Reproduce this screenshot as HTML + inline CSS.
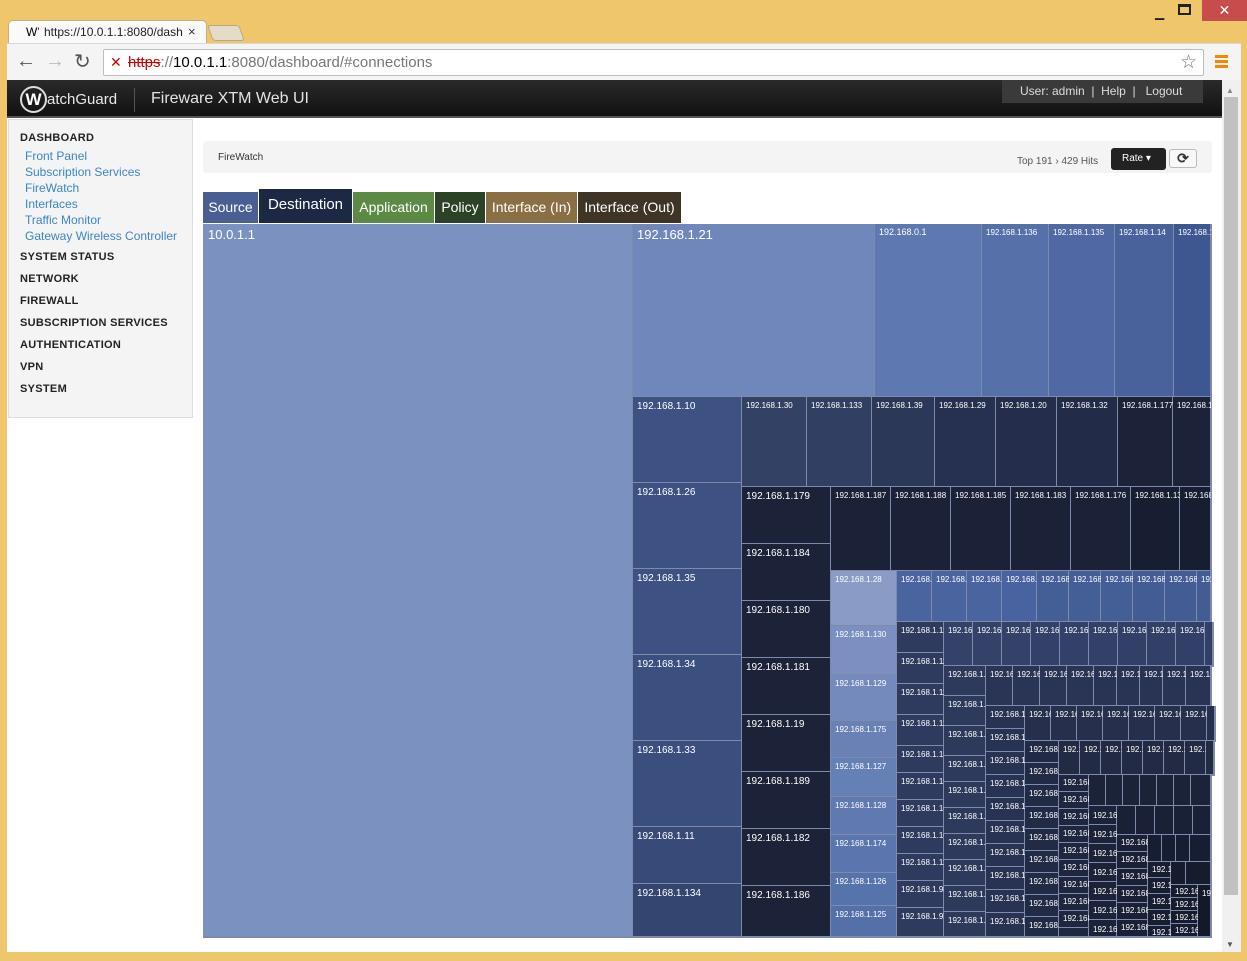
<!DOCTYPE html>
<html><head><meta charset="utf-8">
<style>
*{margin:0;padding:0;box-sizing:border-box}
body{width:1247px;height:961px;overflow:hidden;background:#efc66b;font-family:"Liberation Sans",sans-serif;position:relative}
.a{position:absolute}
.c{position:absolute;border-style:none solid solid none;border-width:1px;border-color:#7d8aab;box-shadow:inset -1px -1px 0 #7d8aab;color:#fff;font-size:9px;padding:3px 4px;overflow:hidden;white-space:nowrap;line-height:11px}
.b{font-size:10px;padding:4px 4px}
.tab{position:absolute;top:192px;height:31px;color:#fff;font-size:14px;line-height:31px;text-align:center}
.nav a{display:block;color:#3a86c8;font-size:12px;line-height:16px;padding-left:16px}
.nav b{display:block;font-size:11px;color:#222;padding-left:11px;letter-spacing:.3px;line-height:13px}
.nav b.s{margin-top:9px}
</style></head><body>
<!-- browser chrome -->
<div class="a" style="left:8px;top:20px;width:199px;height:24px;background:#fafafa;border-radius:5px 5px 0 0;border:1px solid #c9b07a;border-bottom:none"></div>
<div class="a" style="left:26px;top:25px;font-size:12px;color:#000">W<span style="color:#c00">'</span></div>
<div class="a" style="left:44px;top:25px;font-size:12px;color:#222">https://10.0.1.1:8080/dash</div>
<div class="a" style="left:188px;top:24px;font-size:13px;color:#333">×</div>
<div class="a" style="left:210px;top:25px;width:32px;height:16px;background:#e4dcc8;border:1px solid #b9a97f;border-radius:3px;transform:skewX(20deg)"></div>
<div class="a" style="left:1155px;top:6px;font-size:12px;color:#222">▁</div>
<div class="a" style="left:1178px;top:4px;width:13px;height:11px;border:2px solid #222;border-top-width:3px"></div>
<div class="a" style="left:1202px;top:0;width:45px;height:21px;background:#c94c4c;color:#fff;text-align:center;font-size:14px;line-height:21px">✕</div>
<div class="a" style="left:7px;top:43px;width:1234px;height:37px;background:#f4f4f4;border-top:1px solid #d8d8d8"></div>
<div class="a" style="left:16px;top:50px;font-size:20px;color:#555">←</div>
<div class="a" style="left:45px;top:50px;font-size:20px;color:#bbb">→</div>
<div class="a" style="left:74px;top:49px;font-size:20px;color:#555">↻</div>
<div class="a" style="left:103px;top:49px;width:1101px;height:27px;background:#fff;border:1px solid #bdbdbd;border-radius:2px"></div>
<div class="a" style="left:110px;top:54px;font-size:14px;color:#c00">✕</div>
<div class="a" style="left:128px;top:54px;font-size:15px;color:#777"><span style="color:#c00;text-decoration:line-through">https</span>://<span style="color:#000">10.0.1.1</span>:8080/dashboard/#connections</div>
<div class="a" style="left:1180px;top:51px;font-size:19px;color:#777">☆</div>
<div class="a" style="left:1215px;top:55px;width:13px;height:13px;border-top:3px solid #f08a00;border-bottom:3px solid #f08a00"><div style="margin-top:2px;height:3px;background:#f08a00"></div></div>
<!-- page -->
<div class="a" style="left:7px;top:80px;width:1215px;height:872px;background:#fff"></div>
<div class="a" style="left:1222px;top:80px;width:19px;height:872px;background:#f0f0f0"></div>
<div class="a" style="left:1224px;top:97px;width:14px;height:798px;background:#c1c1c1"></div>
<div class="a" style="left:1226px;top:86px;font-size:8px;color:#888">▲</div>
<div class="a" style="left:1226px;top:940px;font-size:8px;color:#555">▼</div>
<!-- header -->
<div class="a" style="left:7px;top:80px;width:1215px;height:38px;background:linear-gradient(#2a2a2a,#111);border-bottom:2px solid #555"></div>
<div class="a" style="left:20px;top:86px;width:27px;height:27px;border:2px solid #ddd;border-radius:50%;color:#fff;font-size:17px;font-weight:bold;text-align:center;line-height:23px">W</div>
<div class="a" style="left:47px;top:91px;font-size:15px;color:#e8e8e8">atchGuard</div>
<div class="a" style="left:134px;top:88px;width:1px;height:24px;background:#555"></div>
<div class="a" style="left:151px;top:90px;font-size:16px;color:#e4e4e4">Fireware XTM Web UI</div>
<div class="a" style="left:1002px;top:80px;width:201px;height:23px;background:#3a3a3a;color:#ddd;font-size:12px;line-height:22px;padding-left:18px">User: admin &nbsp;| &nbsp;Help &nbsp;| &nbsp; Logout</div>
<!-- sidebar -->
<div class="a nav" style="left:8px;top:119px;width:185px;height:299px;background:#f4f4f4;border:1px solid #ddd;padding-top:12px">
<b style="margin-bottom:3px">DASHBOARD</b>
<a>Front Panel</a><a>Subscription Services</a><a>FireWatch</a><a>Interfaces</a><a>Traffic Monitor</a><a>Gateway Wireless Controller</a>
<b style="margin-top:7px">SYSTEM STATUS</b><b class="s">NETWORK</b><b class="s">FIREWALL</b><b class="s">SUBSCRIPTION SERVICES</b><b class="s">AUTHENTICATION</b><b class="s">VPN</b><b class="s">SYSTEM</b>
</div>
<!-- firewatch bar -->
<div class="a" style="left:203px;top:141px;width:1009px;height:32px;background:#f4f4f4;border-radius:3px"></div>
<div class="a" style="left:218px;top:152px;font-size:10px;color:#333">FireWatch</div>
<div class="a" style="left:1017px;top:156px;font-size:10px;color:#555">Top 191 › 429 Hits</div>
<div class="a" style="left:1111px;top:148px;width:55px;height:22px;background:#222;border-radius:3px;color:#fff;font-size:10px;line-height:21px;padding-left:11px">Rate ▾</div>
<div class="a" style="left:1169px;top:149px;width:28px;height:19px;background:#f8f8f8;border:1px solid #bbb;border-radius:3px;text-align:center;font-size:14px;line-height:17px;color:#333;font-weight:bold">⟳</div>
<!-- tabs -->
<div class="tab" style="left:203px;width:55px;background:#4a5e94">Source</div>
<div class="tab" style="left:259px;top:189px;height:34px;width:93px;background:#1d2844;font-size:15px">Destination</div>
<div class="tab" style="left:353px;width:81px;background:#5a8a44">Application</div>
<div class="tab" style="left:435px;width:50px;background:#2c4226">Policy</div>
<div class="tab" style="left:486px;width:91px;background:#8a6e44">Interface (In)</div>
<div class="tab" style="left:578px;width:103px;background:#3e3526">Interface (Out)</div>
<!-- treemap -->
<div class="a" style="left:203px;top:224px;width:1009px;height:714px;background:#1a2034;border-top:1px solid #8a9ac0;border-left:1px solid #8a9ac0"></div>
<div class="c" style="left:203px;top:224px;width:431px;height:714px;background:#7b92c1;font-size:13px;padding:3px 5px;line-height:16px">10.0.1.1</div>
<div class="c" style="left:633px;top:224px;width:243px;height:174px;background:#6f87ba;font-size:13px;line-height:16px">192.168.1.21</div>
<div class="c" style="left:875px;top:224px;width:108px;height:174px;background:#5e78b1">192.168.0.1</div>
<div class="c" style="left:982px;top:224px;width:68px;height:174px;background:#5670aa;font-size:8px">192.168.1.136</div>
<div class="c" style="left:1049px;top:224px;width:67px;height:174px;background:#5069a4;font-size:8px">192.168.1.135</div>
<div class="c" style="left:1115px;top:224px;width:60px;height:174px;background:#4a629c;font-size:8px">192.168.1.14</div>
<div class="c" style="left:1174px;top:224px;width:38px;height:174px;background:#3f5790;font-size:8px">192.168.1.</div>
<div class="c b" style="left:633px;top:397px;width:110px;height:87px;background:#3d5282">192.168.1.10</div>
<div class="c b" style="left:633px;top:483px;width:110px;height:87px;background:#3d5282">192.168.1.26</div>
<div class="c b" style="left:633px;top:569px;width:110px;height:87px;background:#3d5282">192.168.1.35</div>
<div class="c b" style="left:633px;top:655px;width:110px;height:87px;background:#3c5080">192.168.1.34</div>
<div class="c b" style="left:633px;top:741px;width:110px;height:87px;background:#3b4f7e">192.168.1.33</div>
<div class="c b" style="left:633px;top:827px;width:110px;height:58px;background:#384b78">192.168.1.11</div>
<div class="c b" style="left:633px;top:884px;width:110px;height:54px;background:#344670">192.168.1.134</div>
<div class="c" style="left:742px;top:397px;width:66px;height:91px;background:#334264;font-size:8px">192.168.1.30</div>
<div class="c" style="left:807px;top:397px;width:66px;height:91px;background:#314062;font-size:8px">192.168.1.133</div>
<div class="c" style="left:872px;top:397px;width:64px;height:91px;background:#2c3858;font-size:8px">192.168.1.39</div>
<div class="c" style="left:935px;top:397px;width:62px;height:91px;background:#263050;font-size:8px">192.168.1.29</div>
<div class="c" style="left:996px;top:397px;width:62px;height:91px;background:#242e4c;font-size:8px">192.168.1.20</div>
<div class="c" style="left:1057px;top:397px;width:62px;height:91px;background:#222b47;font-size:8px">192.168.1.32</div>
<div class="c" style="left:1118px;top:397px;width:56px;height:91px;background:#1c2339;font-size:8px">192.168.1.177</div>
<div class="c" style="left:1173px;top:397px;width:39px;height:91px;background:#1c2339;font-size:8px">192.168.1.</div>
<div class="c b" style="left:742px;top:487px;width:90px;height:58px;background:#1c2338">192.168.1.179</div>
<div class="c b" style="left:742px;top:544px;width:90px;height:58px;background:#1c2338">192.168.1.184</div>
<div class="c b" style="left:742px;top:601px;width:90px;height:58px;background:#1c2338">192.168.1.180</div>
<div class="c b" style="left:742px;top:658px;width:90px;height:58px;background:#1c2338">192.168.1.181</div>
<div class="c b" style="left:742px;top:715px;width:90px;height:58px;background:#1c2338">192.168.1.19</div>
<div class="c b" style="left:742px;top:772px;width:90px;height:58px;background:#1c2338">192.168.1.189</div>
<div class="c b" style="left:742px;top:829px;width:90px;height:58px;background:#1c2338">192.168.1.182</div>
<div class="c b" style="left:742px;top:886px;width:90px;height:52px;background:#1c2338">192.168.1.186</div>
<div class="c" style="left:831px;top:487px;width:61px;height:85px;background:#1b2237;font-size:8px">192.168.1.187</div>
<div class="c" style="left:891px;top:487px;width:61px;height:85px;background:#1b2237;font-size:8px">192.168.1.188</div>
<div class="c" style="left:951px;top:487px;width:61px;height:85px;background:#1b2237;font-size:8px">192.168.1.185</div>
<div class="c" style="left:1011px;top:487px;width:61px;height:85px;background:#1b2237;font-size:8px">192.168.1.183</div>
<div class="c" style="left:1071px;top:487px;width:61px;height:85px;background:#1b2237;font-size:8px">192.168.1.176</div>
<div class="c" style="left:1131px;top:487px;width:50px;height:85px;background:#181e31;font-size:8px">192.168.1.13</div>
<div class="c" style="left:1180px;top:487px;width:32px;height:85px;background:#181e31;font-size:8px">192.168.</div>
<div class="c" style="left:831px;top:571px;width:67px;height:56px;background:#8a9cc6;font-size:8px">192.168.1.28</div>
<div class="c" style="left:831px;top:626px;width:67px;height:50px;background:#7b90c0;font-size:8px">192.168.1.130</div>
<div class="c" style="left:831px;top:675px;width:67px;height:47px;background:#7489bc;font-size:8px">192.168.1.129</div>
<div class="c" style="left:831px;top:721px;width:67px;height:38px;background:#6a81b6;font-size:8px">192.168.1.175</div>
<div class="c" style="left:831px;top:758px;width:67px;height:40px;background:#6580b4;font-size:8px">192.168.1.127</div>
<div class="c" style="left:831px;top:797px;width:67px;height:39px;background:#6079b0;font-size:8px">192.168.1.128</div>
<div class="c" style="left:831px;top:835px;width:67px;height:39px;background:#5b76ae;font-size:8px">192.168.1.174</div>
<div class="c" style="left:831px;top:873px;width:67px;height:34px;background:#5773ab;font-size:8px">192.168.1.126</div>
<div class="c" style="left:831px;top:906px;width:67px;height:32px;background:#5570a8;font-size:8px">192.168.1.125</div>
<div class="c" style="left:897px;top:571px;width:36px;height:52px;background:#4a64a0;font-size:8px">192.168.1</div>
<div class="c" style="left:932px;top:571px;width:36px;height:52px;background:#4a64a0;font-size:8px">192.168.1</div>
<div class="c" style="left:967px;top:571px;width:36px;height:52px;background:#4a64a0;font-size:8px">192.168.1</div>
<div class="c" style="left:1002px;top:571px;width:36px;height:52px;background:#4963a0;font-size:8px">192.168.1</div>
<div class="c" style="left:1037px;top:571px;width:33px;height:52px;background:#445e96;font-size:8px">192.168.</div>
<div class="c" style="left:1069px;top:571px;width:33px;height:52px;background:#445e96;font-size:8px">192.168.</div>
<div class="c" style="left:1101px;top:571px;width:33px;height:52px;background:#445e96;font-size:8px">192.168.</div>
<div class="c" style="left:1133px;top:571px;width:33px;height:52px;background:#435c94;font-size:8px">192.168.</div>
<div class="c" style="left:1165px;top:571px;width:33px;height:52px;background:#435c94;font-size:8px">192.168.</div>
<div class="c" style="left:1197px;top:571px;width:15px;height:52px;background:#435c94;font-size:8px">192</div>
<div class="c" style="left:897px;top:622px;width:48px;height:32px;background:#2f3b5e;font-size:8px">192.168.1.12</div>
<div class="c" style="left:897px;top:653px;width:48px;height:32px;background:#2f3b5e;font-size:8px">192.168.1.11</div>
<div class="c" style="left:897px;top:684px;width:48px;height:32px;background:#2f3b5e;font-size:8px">192.168.1.11</div>
<div class="c" style="left:897px;top:715px;width:48px;height:32px;background:#2f3b5e;font-size:8px">192.168.1.11</div>
<div class="c" style="left:897px;top:746px;width:48px;height:28px;background:#2f3b5e;font-size:8px">192.168.1.15</div>
<div class="c" style="left:897px;top:773px;width:48px;height:28px;background:#2f3b5e;font-size:8px">192.168.1.15</div>
<div class="c" style="left:897px;top:800px;width:48px;height:28px;background:#2f3b5e;font-size:8px">192.168.1.16</div>
<div class="c" style="left:897px;top:827px;width:48px;height:28px;background:#2f3b5e;font-size:8px">192.168.1.16</div>
<div class="c" style="left:897px;top:854px;width:48px;height:28px;background:#2f3b5e;font-size:8px">192.168.1.11</div>
<div class="c" style="left:897px;top:881px;width:48px;height:28px;background:#2f3b5e;font-size:8px">192.168.1.98</div>
<div class="c" style="left:897px;top:908px;width:48px;height:30px;background:#2f3b5e;font-size:8px">192.168.1.97</div>
<div class="c" style="left:944px;top:622px;width:30px;height:45px;background:#34426a;font-size:8px">192.16</div>
<div class="c" style="left:973px;top:622px;width:30px;height:45px;background:#34426a;font-size:8px">192.16</div>
<div class="c" style="left:1002px;top:622px;width:30px;height:45px;background:#34426a;font-size:8px">192.16</div>
<div class="c" style="left:1031px;top:622px;width:30px;height:45px;background:#33416a;font-size:8px">192.16</div>
<div class="c" style="left:1060px;top:622px;width:30px;height:45px;background:#33416a;font-size:8px">192.16</div>
<div class="c" style="left:1089px;top:622px;width:30px;height:45px;background:#33416a;font-size:8px">192.16</div>
<div class="c" style="left:1118px;top:622px;width:30px;height:45px;background:#324068;font-size:8px">192.16</div>
<div class="c" style="left:1147px;top:622px;width:30px;height:45px;background:#324068;font-size:8px">192.16</div>
<div class="c" style="left:1176px;top:622px;width:30px;height:45px;background:#324068;font-size:8px">192.16</div>
<div class="c" style="left:1205px;top:622px;width:7px;height:45px;background:#324068"></div>
<div class="c" style="left:944px;top:666px;width:43px;height:31px;background:#2d3a5c;font-size:8px">192.168.1.1</div>
<div class="c" style="left:944px;top:696px;width:43px;height:31px;background:#2d3a5c;font-size:8px">192.168.1.1</div>
<div class="c" style="left:944px;top:726px;width:43px;height:31px;background:#2d3a5c;font-size:8px">192.168.1.1</div>
<div class="c" style="left:944px;top:756px;width:43px;height:27px;background:#2d3a5c;font-size:8px">192.168.1.9</div>
<div class="c" style="left:944px;top:782px;width:43px;height:27px;background:#2d3a5c;font-size:8px">192.168.1.9</div>
<div class="c" style="left:944px;top:808px;width:43px;height:27px;background:#2d3a5c;font-size:8px">192.168.1.1</div>
<div class="c" style="left:944px;top:834px;width:43px;height:27px;background:#2d3a5c;font-size:8px">192.168.1.1</div>
<div class="c" style="left:944px;top:860px;width:43px;height:27px;background:#2d3a5c;font-size:8px">192.168.1.1</div>
<div class="c" style="left:944px;top:886px;width:43px;height:27px;background:#2d3a5c;font-size:8px">192.168.1.1</div>
<div class="c" style="left:944px;top:912px;width:43px;height:26px;background:#2d3a5c;font-size:8px">192.168.1.1</div>
<div class="c" style="left:986px;top:666px;width:28px;height:41px;background:#2a3556;font-size:8px">192.16</div>
<div class="c" style="left:1013px;top:666px;width:28px;height:41px;background:#2a3556;font-size:8px">192.16</div>
<div class="c" style="left:1040px;top:666px;width:28px;height:41px;background:#2a3556;font-size:8px">192.16</div>
<div class="c" style="left:1067px;top:666px;width:28px;height:41px;background:#2a3556;font-size:8px">192.16</div>
<div class="c" style="left:1094px;top:666px;width:24px;height:41px;background:#293454;font-size:8px">192.1</div>
<div class="c" style="left:1117px;top:666px;width:24px;height:41px;background:#293454;font-size:8px">192.1</div>
<div class="c" style="left:1140px;top:666px;width:24px;height:41px;background:#293454;font-size:8px">192.1</div>
<div class="c" style="left:1163px;top:666px;width:24px;height:41px;background:#293454;font-size:8px">192.1</div>
<div class="c" style="left:1186px;top:666px;width:26px;height:41px;background:#293454;font-size:8px">192.1</div>
<div class="c" style="left:986px;top:706px;width:40px;height:24px;background:#283252;font-size:8px">192.168.1.</div>
<div class="c" style="left:986px;top:729px;width:40px;height:24px;background:#283252;font-size:8px">192.168.1.</div>
<div class="c" style="left:986px;top:752px;width:40px;height:24px;background:#283252;font-size:8px">192.168.1.</div>
<div class="c" style="left:986px;top:775px;width:40px;height:24px;background:#283252;font-size:8px">192.168.1.</div>
<div class="c" style="left:986px;top:798px;width:40px;height:24px;background:#283252;font-size:8px">192.168.1.</div>
<div class="c" style="left:986px;top:821px;width:40px;height:24px;background:#283252;font-size:8px">192.168.1.</div>
<div class="c" style="left:986px;top:844px;width:40px;height:24px;background:#283252;font-size:8px">192.168.1.</div>
<div class="c" style="left:986px;top:867px;width:40px;height:24px;background:#283252;font-size:8px">192.168.1.</div>
<div class="c" style="left:986px;top:890px;width:40px;height:24px;background:#283252;font-size:8px">192.168.1.</div>
<div class="c" style="left:986px;top:913px;width:40px;height:25px;background:#283252;font-size:8px">192.168.1.</div>
<div class="c" style="left:1025px;top:706px;width:27px;height:36px;background:#26304c;font-size:8px">192.16</div>
<div class="c" style="left:1051px;top:706px;width:27px;height:36px;background:#26304c;font-size:8px">192.16</div>
<div class="c" style="left:1077px;top:706px;width:27px;height:36px;background:#26304c;font-size:8px">192.16</div>
<div class="c" style="left:1103px;top:706px;width:27px;height:36px;background:#26304c;font-size:8px">192.16</div>
<div class="c" style="left:1129px;top:706px;width:27px;height:36px;background:#26304c;font-size:8px">192.16</div>
<div class="c" style="left:1155px;top:706px;width:27px;height:36px;background:#26304c;font-size:8px">192.16</div>
<div class="c" style="left:1181px;top:706px;width:27px;height:36px;background:#26304c;font-size:8px">192.16</div>
<div class="c" style="left:1207px;top:706px;width:5px;height:36px;background:#26304c"></div>
<div class="c" style="left:1025px;top:741px;width:35px;height:23px;background:#222b45;font-size:8px">192.168.</div>
<div class="c" style="left:1025px;top:763px;width:35px;height:23px;background:#222b45;font-size:8px">192.168.</div>
<div class="c" style="left:1025px;top:785px;width:35px;height:23px;background:#222b45;font-size:8px">192.168.</div>
<div class="c" style="left:1025px;top:807px;width:35px;height:23px;background:#222b45;font-size:8px">192.168.</div>
<div class="c" style="left:1025px;top:829px;width:35px;height:23px;background:#222b45;font-size:8px">192.168.</div>
<div class="c" style="left:1025px;top:851px;width:35px;height:23px;background:#222b45;font-size:8px">192.168.</div>
<div class="c" style="left:1025px;top:873px;width:35px;height:23px;background:#222b45;font-size:8px">192.168.</div>
<div class="c" style="left:1025px;top:895px;width:35px;height:23px;background:#222b45;font-size:8px">192.168.</div>
<div class="c" style="left:1025px;top:917px;width:35px;height:21px;background:#222b45;font-size:8px">192.168.</div>
<div class="c" style="left:1059px;top:741px;width:22px;height:35px;background:#222a44;font-size:8px">192.1</div>
<div class="c" style="left:1080px;top:741px;width:22px;height:35px;background:#222a44;font-size:8px">192.1</div>
<div class="c" style="left:1101px;top:741px;width:22px;height:35px;background:#222a44;font-size:8px">192.1</div>
<div class="c" style="left:1122px;top:741px;width:22px;height:35px;background:#222a44;font-size:8px">192.1</div>
<div class="c" style="left:1143px;top:741px;width:22px;height:35px;background:#222a44;font-size:8px">192.1</div>
<div class="c" style="left:1164px;top:741px;width:22px;height:35px;background:#222a44;font-size:8px">192.1</div>
<div class="c" style="left:1185px;top:741px;width:22px;height:35px;background:#222a44;font-size:8px">192.1</div>
<div class="c" style="left:1206px;top:741px;width:6px;height:35px;background:#222a44"></div>
<div class="c" style="left:1059px;top:775px;width:31px;height:18px;background:#1e2640;font-size:8px;padding-top:2px">192.168</div>
<div class="c" style="left:1059px;top:792px;width:31px;height:18px;background:#1e2640;font-size:8px;padding-top:2px">192.168</div>
<div class="c" style="left:1059px;top:809px;width:31px;height:18px;background:#1e2640;font-size:8px;padding-top:2px">192.168</div>
<div class="c" style="left:1059px;top:826px;width:31px;height:18px;background:#1e2640;font-size:8px;padding-top:2px">192.168</div>
<div class="c" style="left:1059px;top:843px;width:31px;height:18px;background:#1e2640;font-size:8px;padding-top:2px">192.168</div>
<div class="c" style="left:1059px;top:860px;width:31px;height:18px;background:#1e2640;font-size:8px;padding-top:2px">192.168</div>
<div class="c" style="left:1059px;top:877px;width:31px;height:18px;background:#1e2640;font-size:8px;padding-top:2px">192.168</div>
<div class="c" style="left:1059px;top:894px;width:31px;height:18px;background:#1e2640;font-size:8px;padding-top:2px">192.168</div>
<div class="c" style="left:1059px;top:911px;width:31px;height:18px;background:#1e2640;font-size:8px;padding-top:2px">192.168</div>
<div class="c" style="left:1059px;top:928px;width:31px;height:10px;background:#1e2640"></div>
<div class="c" style="left:1089px;top:775px;width:18px;height:32px;background:#1c2339"></div>
<div class="c" style="left:1106px;top:775px;width:18px;height:32px;background:#1c2339"></div>
<div class="c" style="left:1123px;top:775px;width:18px;height:32px;background:#1c2339"></div>
<div class="c" style="left:1140px;top:775px;width:18px;height:32px;background:#1c2339"></div>
<div class="c" style="left:1157px;top:775px;width:18px;height:32px;background:#1c2339"></div>
<div class="c" style="left:1174px;top:775px;width:18px;height:32px;background:#1c2339"></div>
<div class="c" style="left:1191px;top:775px;width:21px;height:32px;background:#1c2339"></div>
<div class="c" style="left:1089px;top:806px;width:29px;height:20px;background:#1c2339;font-size:8px;padding-top:4px">192.16</div>
<div class="c" style="left:1089px;top:825px;width:29px;height:20px;background:#1c2339;font-size:8px;padding-top:4px">192.16</div>
<div class="c" style="left:1089px;top:844px;width:29px;height:20px;background:#1c2339;font-size:8px;padding-top:4px">192.16</div>
<div class="c" style="left:1089px;top:863px;width:29px;height:20px;background:#1c2339;font-size:8px;padding-top:4px">192.16</div>
<div class="c" style="left:1089px;top:882px;width:29px;height:20px;background:#1c2339;font-size:8px;padding-top:4px">192.16</div>
<div class="c" style="left:1089px;top:901px;width:29px;height:20px;background:#1c2339;font-size:8px;padding-top:4px">192.16</div>
<div class="c" style="left:1089px;top:920px;width:29px;height:18px;background:#1c2339;font-size:8px;padding-top:4px">192.16</div>
<div class="c" style="left:1117px;top:806px;width:20px;height:30px;background:#1a2035"></div>
<div class="c" style="left:1136px;top:806px;width:20px;height:30px;background:#1a2035"></div>
<div class="c" style="left:1155px;top:806px;width:20px;height:30px;background:#1a2035"></div>
<div class="c" style="left:1174px;top:806px;width:20px;height:30px;background:#1a2035"></div>
<div class="c" style="left:1193px;top:806px;width:19px;height:30px;background:#1a2035"></div>
<div class="c" style="left:1117px;top:835px;width:32px;height:18px;background:#1a2035;font-size:8px;padding-top:2px">192.168</div>
<div class="c" style="left:1117px;top:852px;width:32px;height:18px;background:#1a2035;font-size:8px;padding-top:2px">192.168</div>
<div class="c" style="left:1117px;top:869px;width:32px;height:18px;background:#1a2035;font-size:8px;padding-top:2px">192.168</div>
<div class="c" style="left:1117px;top:886px;width:32px;height:18px;background:#1a2035;font-size:8px;padding-top:2px">192.168</div>
<div class="c" style="left:1117px;top:903px;width:32px;height:18px;background:#1a2035;font-size:8px;padding-top:2px">192.168</div>
<div class="c" style="left:1117px;top:920px;width:32px;height:18px;background:#1a2035;font-size:8px;padding-top:2px">192.168</div>
<div class="c" style="left:1148px;top:835px;width:15px;height:28px;background:#181e31"></div>
<div class="c" style="left:1162px;top:835px;width:15px;height:28px;background:#181e31"></div>
<div class="c" style="left:1176px;top:835px;width:15px;height:28px;background:#181e31"></div>
<div class="c" style="left:1190px;top:835px;width:22px;height:28px;background:#181e31"></div>
<div class="c" style="left:1148px;top:862px;width:24px;height:17px;background:#181e31;font-size:8px;padding-top:2px">192.1</div>
<div class="c" style="left:1148px;top:878px;width:24px;height:17px;background:#181e31;font-size:8px;padding-top:2px">192.1</div>
<div class="c" style="left:1148px;top:894px;width:24px;height:17px;background:#181e31;font-size:8px;padding-top:2px">192.1</div>
<div class="c" style="left:1148px;top:910px;width:24px;height:17px;background:#181e31;font-size:8px;padding-top:2px">192.1</div>
<div class="c" style="left:1148px;top:926px;width:24px;height:12px;background:#181e31;font-size:8px;padding-top:1px">192.1</div>
<div class="c" style="left:1171px;top:862px;width:16px;height:24px;background:#161b2d"></div>
<div class="c" style="left:1186px;top:862px;width:26px;height:24px;background:#161b2d"></div>
<div class="c" style="left:1171px;top:885px;width:28px;height:14px;background:#161b2d;font-size:8px;padding-top:1px">192.16</div>
<div class="c" style="left:1171px;top:898px;width:28px;height:14px;background:#161b2d;font-size:8px;padding-top:1px">192.16</div>
<div class="c" style="left:1171px;top:911px;width:28px;height:14px;background:#161b2d;font-size:8px;padding-top:1px">192.16</div>
<div class="c" style="left:1171px;top:924px;width:28px;height:14px;background:#161b2d;font-size:8px;padding-top:1px">192.16</div>
<div class="c" style="left:1198px;top:885px;width:14px;height:53px;background:#141929;font-size:8px">192</div>
</body></html>
